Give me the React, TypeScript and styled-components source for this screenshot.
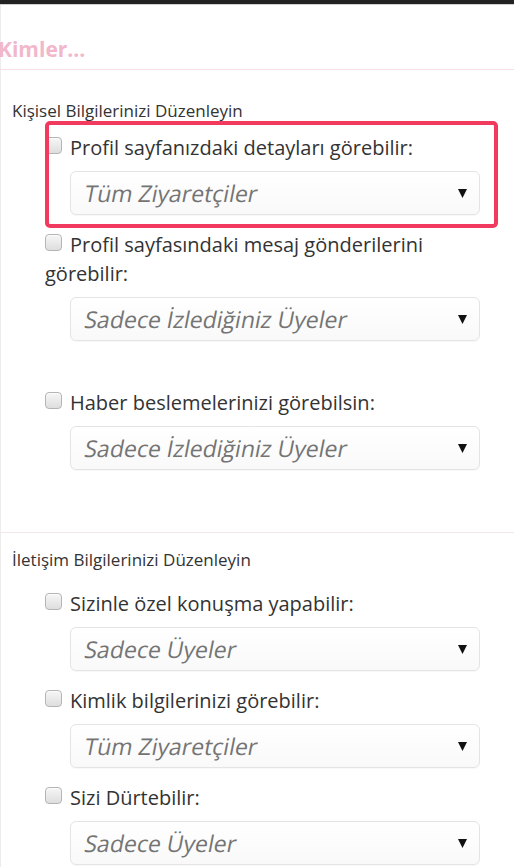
import type { FC } from 'react';
import styled, { createGlobalStyle } from 'styled-components';

interface FieldData {
  label: string;
  value: string;
  highlighted?: boolean;
  gapAfter?: number;
}

interface SectionData {
  title: string;
  padTop: number;
  titleGap: number;
  padBottom: number;
  fields: FieldData[];
}

const sections: SectionData[] = [
  {
    title: 'Kişisel Bilgilerinizi Düzenleyin',
    padTop: 31,
    titleGap: 12,
    padBottom: 47,
    fields: [
      {
        label: 'Profil sayfanızdaki detayları görebilir:',
        value: 'Tüm Ziyaretçiler',
        highlighted: true,
      },
      {
        label: 'Profil sayfasındaki mesaj gönderilerini görebilir:',
        value: 'Sadece İzlediğiniz Üyeler',
        gapAfter: 47,
      },
      {
        label: 'Haber beslemelerinizi görebilsin:',
        value: 'Sadece İzlediğiniz Üyeler',
      },
    ],
  },
  {
    title: 'İletişim Bilgilerinizi Düzenleyin',
    padTop: 17,
    titleGap: 19,
    padBottom: 0,
    fields: [
      { label: 'Sizinle özel konuşma yapabilir:', value: 'Sadece Üyeler' },
      { label: 'Kimlik bilgilerinizi görebilir:', value: 'Tüm Ziyaretçiler' },
      { label: 'Sizi Dürtebilir:', value: 'Sadece Üyeler' },
    ],
  },
];

const GlobalStyle = createGlobalStyle`
  html, body {
    margin: 0;
    padding: 0;
    background: #ffffff;
  }
  body {
    font-family: "Open Sans", "Noto Sans", "Liberation Sans", sans-serif;
    color: #333333;
    overflow: hidden;
  }
`;

const StatusBar = styled.div`
  height: 5px;
  background: #222222;
  border-bottom: 1px solid #d0d0d0;
  box-sizing: border-box;
`;

const Panel = styled.div`
  border-left: 1px solid #ececec;
  min-height: 862px;
`;

const PageTitle = styled.h1`
  margin: 0 0 0 -3px;
  padding: 32px 0 7px;
  font-size: 21px;
  line-height: 25px;
  font-weight: 700;
  color: #f2b7cb;
  border-bottom: 1px solid #f9dde5;
`;

const Section = styled.section<{ $padTop: number; $padBottom: number }>`
  padding: ${(p) => p.$padTop}px 0 ${(p) => p.$padBottom}px 11px;
  & + & {
    border-top: 1px solid #f3e6e9;
  }
`;

const SectionTitle = styled.h2<{ $gap: number }>`
  margin: 0 0 ${(p) => p.$gap}px;
  font-size: 17px;
  line-height: 20px;
  font-weight: 400;
  color: #333333;
`;

const FieldList = styled.div`
  display: flex;
  flex-direction: column;
  padding-left: 33px;
  width: 435px;
`;

const Field = styled.div<{ $highlighted?: boolean; $gapAfter: number }>`
  position: relative;
  display: flex;
  flex-direction: column;
  gap: 9px;
  margin-bottom: ${(p) => p.$gapAfter}px;

  ${(p) =>
    p.$highlighted &&
    `
    &::after {
      content: '';
      position: absolute;
      top: -12px;
      left: 0;
      right: -18px;
      bottom: -13px;
      border: 4px solid #f23a5f;
      border-radius: 5px;
      pointer-events: none;
    }
  `}
`;

const Label = styled.label`
  font-size: 20px;
  line-height: 29px;
  color: #333333;
`;

const Checkbox = styled.span`
  display: inline-block;
  width: 17px;
  height: 17px;
  margin-right: 8px;
  vertical-align: 1px;
  box-sizing: border-box;
  border: 1px solid #b4b4b4;
  border-radius: 4px;
  background: linear-gradient(#f6f6f6, #dedede);
  box-shadow: inset 0 1px 1px rgba(255, 255, 255, 0.8);
`;

const SelectBox = styled.div`
  margin-left: 25px;
  height: 44px;
  box-sizing: border-box;
  display: flex;
  align-items: center;
  justify-content: space-between;
  padding: 0 12px 0 14px;
  border: 1px solid #e4e4e4;
  border-radius: 6px;
  background: linear-gradient(#ffffff, #f9f9f9);
  box-shadow: 0 1px 1px rgba(0, 0, 0, 0.03);
`;

/* the original renders a slanted regular face, not a true italic */
const SelectValue = styled.span`
  display: inline-block;
  font-size: 23px;
  line-height: 30px;
  font-style: normal;
  color: #747474;
  transform: skewX(-11deg);
  transform-origin: left center;
`;

const Arrow: FC = () => (
  <svg width="9" height="9" viewBox="0 0 9 9">
    <polygon points="0,0 9,0 4.5,9" fill="#111111" />
  </svg>
);

const App: FC = () => (
  <>
    <GlobalStyle />
    <StatusBar />
    <Panel>
      <PageTitle>Kimler...</PageTitle>
      {sections.map((section) => (
        <Section
          key={section.title}
          $padTop={section.padTop}
          $padBottom={section.padBottom}
        >
          <SectionTitle $gap={section.titleGap}>{section.title}</SectionTitle>
          <FieldList>
            {section.fields.map((field) => (
              <Field
                key={field.label}
                $highlighted={field.highlighted}
                $gapAfter={field.gapAfter ?? 15}
              >
                <Label>
                  <Checkbox />
                  {field.label}
                </Label>
                <SelectBox>
                  <SelectValue>{field.value}</SelectValue>
                  <Arrow />
                </SelectBox>
              </Field>
            ))}
          </FieldList>
        </Section>
      ))}
    </Panel>
  </>
);

export default App;
